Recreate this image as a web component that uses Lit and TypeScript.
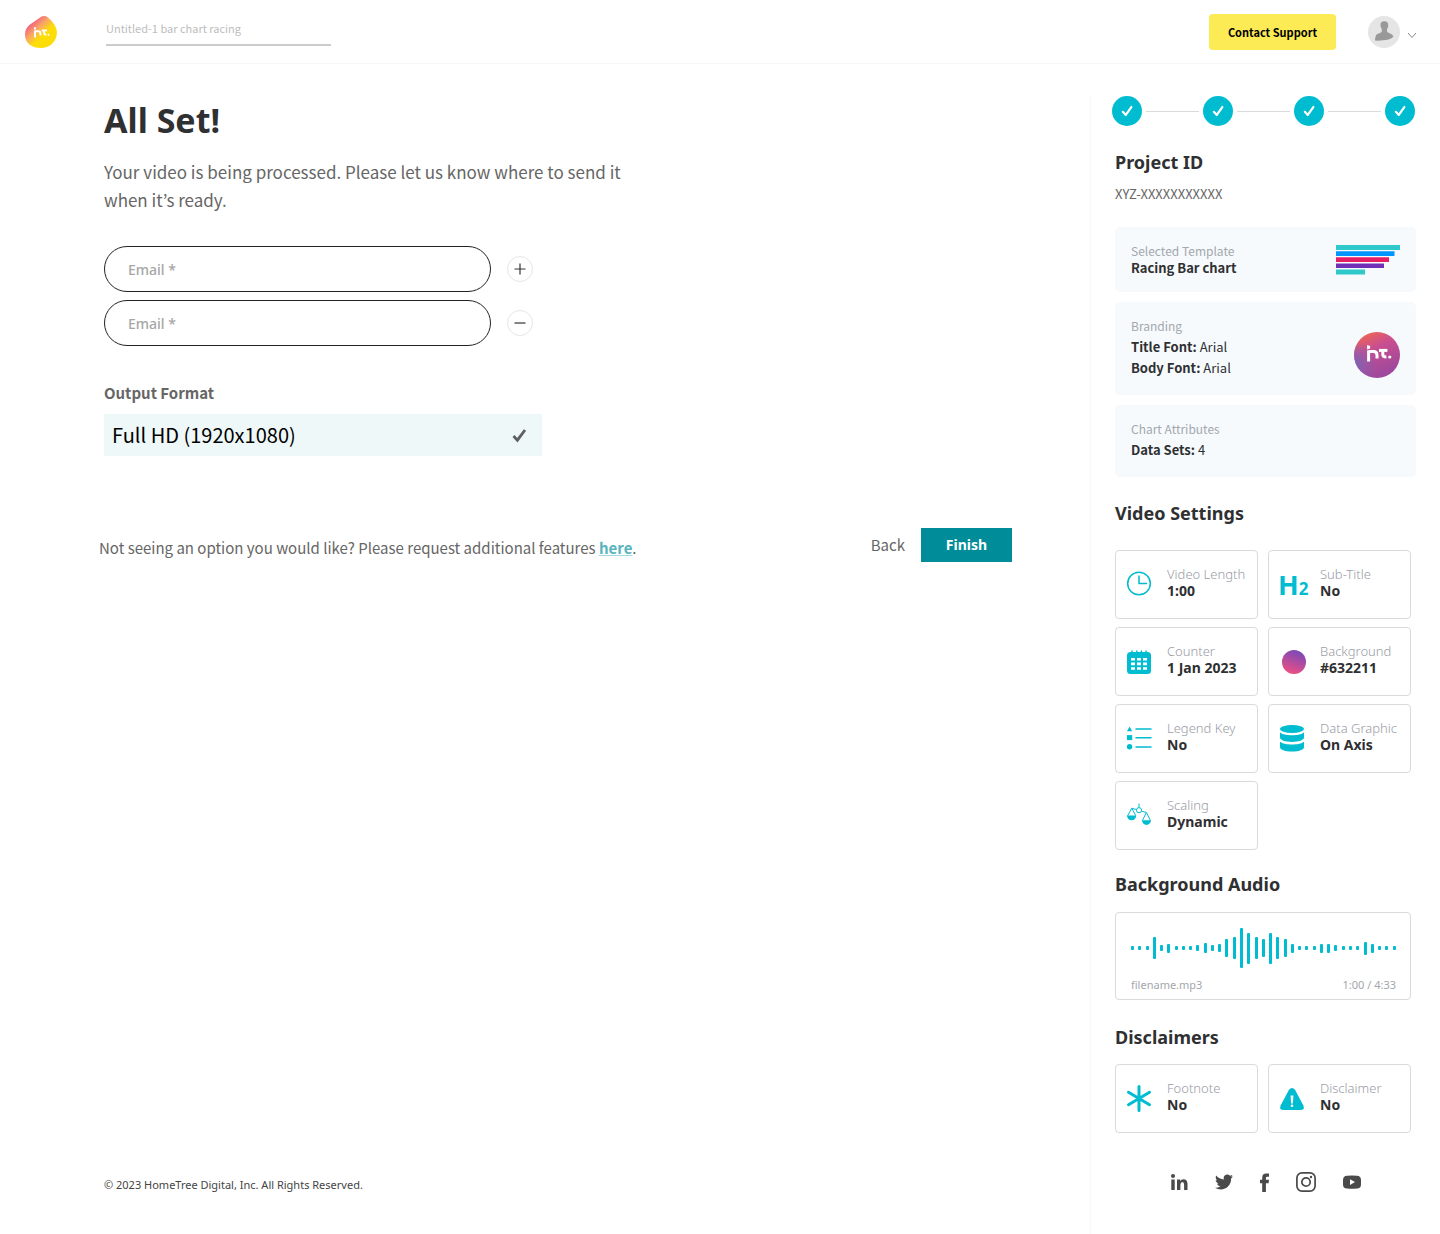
import { LitElement, html, css, svg } from "lit";
import { customElement, property, state } from "lit/decorators.js";

const CYAN = "#00bcd0";

const mark = svg`
  <g fill="none" stroke="#fff" stroke-width="3">
    <path d="M1.6 5.400V16.500"/>
    <path d="M1.6 6.600H6.400Q10 6.600 10 10V13.400"/>
    <path d="M12 5.400H20.400"/>
    <path d="M15.800 5.400V9.800Q15.800 11.900 19.400 11.900"/>
  </g>
  <path fill="#fff" d="M.1 0Q1.600 1 3.100 .6V3.400L.1 4.400Z"/>
  <circle fill="#fff" cx="22.800" cy="12" r="1.600"/>`;

const check = svg`<path fill="none" stroke="currentColor" stroke-width="2.4" stroke-linecap="round" stroke-linejoin="round" d="M2 7.4 5.2 10.8 11.2 2.2"/>`;

const icons: Record<string, unknown> = {
  clock: svg`<g fill="none" stroke="${CYAN}" stroke-width="1.500"><circle cx="12" cy="12.500" r="11.300"/><path d="M12 4.500V12.500H20"/></g>`,
  calendar: svg`<rect x="0" y="4" width="24" height="22" rx="3.5" fill="${CYAN}"/>
    <path stroke="${CYAN}" stroke-width="1.4" stroke-linecap="round" d="M5 3V6M9.8 3V6M14.4 3V6M19 3V6"/>
    <path fill="#fff" d="M4 10h4v2.6H4zM10 10h4v2.6h-4zM16 10h4v2.6h-4zM4 14.6h4v2.6H4zM10 14.6h4v2.6h-4zM16 14.6h4v2.6h-4zM4 19.2h4v2.6H4zM10 19.2h4v2.6h-4zM16 19.2h4v2.6h-4z"/>`,
  list: svg`<g fill="${CYAN}"><path d="M2.6 1.500 5.2 6.300H0Z"/><rect y="10.100" width="5.2" height="5"/><circle cx="2.6" cy="21.800" r="2.7"/></g>
    <path stroke="${CYAN}" stroke-width="1.5" stroke-linecap="round" d="M9 4H24M9 12.800H24M9 22H24"/>`,
  database: svg`<g fill="${CYAN}"><ellipse cx="12" cy="4" rx="12" ry="4"/>
    <path d="M0 7.2C2 9.4 7 10.2 12 10.2S22 9.4 24 7.2V12.6C24 15.2 18.6 17 12 17S0 15.2 0 12.6Z"/>
    <path d="M0 16.4C2 18.6 7 19.4 12 19.4S22 18.6 24 16.4V22C24 24.8 18.6 26.6 12 26.6S0 24.8 0 22Z"/></g>`,
  scales: svg`<g fill="none" stroke="${CYAN}" stroke-width="1"><path d="M12 1.500V5.500M4.800 6.200 9.400 7.600M14.600 9.200 19.400 10.500M4.800 6.200 .6 13.800M4.800 6.200 8.800 13.800M19.400 10.500 15.400 18.500M19.400 10.500 23.400 18.500"/><circle cx="12" cy="8.200" r="2.600"/></g>
    <path fill="${CYAN}" d="M0 13.500H9.200A4.600 4.800 0 0 1 0 13.500ZM15 18.200H24A4.500 4.800 0 0 1 15 18.200Z"/>`,
  asterisk: svg`<path stroke="${CYAN}" stroke-width="3" stroke-linecap="round" d="M12 1.5V25.5M1.5 7.3 22.5 19.7M22.5 7.3 1.5 19.7"/>`,
  warning: svg`<path fill="${CYAN}" d="M9 4.800Q12 1.400 15 4.800L23.400 20.400Q25 25 20.500 25H3.500Q-1 25 .6 20.400Z"/><path fill="#fff" d="M10.600 10.400H13.400L12.900 18.400H11.100Z"/><circle fill="#fff" cx="12" cy="20.800" r="1.300"/>`,
};

@customElement("setting-tile")
class SettingTile extends LitElement {
  @property() label = "";
  @property() value = "";
  @property() icon = "";

  static styles = css`
    :host { display: flex; align-items: center; box-sizing: border-box; height: 69px; padding: 0 0 0 11px; border: 1px solid #d9dadb; border-radius: 4px; background: #fff; }
    .icon { flex: none; width: 28px; height: 28px; margin-right: 12px; overflow: visible; }
    .heading { font: 700 27px "Noto Sans", sans-serif; fill: #00bcd0; }
    .small { font-size: 17px; }
    .swatch { flex: none; width: 24px; height: 24px; margin: 0 14px 0 2px; border-radius: 50%; background: linear-gradient(200deg, #7048bd 5%, #ee4f83 90%); }
    .text { padding-bottom: 5px; white-space: nowrap; }
    .label { font: 300 13px/18px "Noto Sans", sans-serif; color: #9a9ca6; }
    .value { font: 700 14px/16px "Noto Sans", sans-serif; color: #2f3032; }
  `;

  glyph() {
    if (this.icon === "swatch") return html`<span class="swatch"></span>`;
    if (this.icon === "heading")
      return html`<svg class="icon" viewBox="0 0 28 28" aria-hidden="true"><text class="heading" x="-2" y="24">H<tspan class="small">2</tspan></text></svg>`;
    return html`<svg class="icon" viewBox="0 0 28 28" aria-hidden="true">${icons[this.icon]}</svg>`;
  }

  render() {
    return html`${this.glyph()}
      <div class="text"><div class="label">${this.label}</div><div class="value">${this.value}</div></div>`;
  }
}

const socialLinks = [
  { name: "LinkedIn", width: 17, height: 17, art: svg`<circle cx="2" cy="2" r="2"/><path d="M.3 5.500H3.700V16H.3ZM6 5.500H9.200V7Q10.200 5.200 12.500 5.200Q16.500 5.200 16.500 10V16H13.100V10.600Q13.100 8 11.400 8T9.400 10.600V16H6Z"/>` },
  { name: "Twitter", width: 18, height: 16, art: svg`<path d="M18 2.600Q17.200 3.800 16.100 4.500C16.400 10.500 12 15.500 5.800 15.500Q2.600 15.500 0 13.800Q3 14 5.300 12.300Q2.700 12 1.900 9.800H3.500Q.8 8.800 .6 6.100L2.200 6.500Q-.2 4.400 1.200 1.500Q4.300 5.200 8.800 5.400C8.200 2.400 10 .6 12.300 .6Q13.900 .6 15 1.800L17.400 .9Q17 2.200 15.800 2.900Z"/>` },
  { name: "Facebook", width: 9, height: 19, art: svg`<path d="M2.200 19V10.200H0V6.800H2.200V4.600Q2.200.5 6.200.5H9V3.700H7.200Q5.900 3.700 5.900 5V6.800H9L8.600 10.200H5.900V19Z"/>` },
  { name: "Instagram", width: 20, height: 20, art: svg`<g fill="none" stroke="currentColor" stroke-width="1.700"><rect x=".9" y=".9" width="18.200" height="18.200" rx="5"/><circle cx="10" cy="10" r="4.200"/></g><circle cx="15" cy="5" r="1.200"/>` },
  { name: "YouTube", width: 18, height: 14, art: svg`<path fill-rule="evenodd" d="M4 .8Q9 .2 14 .8Q18 1 18 5V9.400Q18 13.300 14 13.500Q9 14 4 13.500Q0 13.300 0 9.400V5Q0 1 4 .8ZM7 4.200V10L12 7.100Z"/>` },
];

@customElement("app-root")
class AppRoot extends LitElement {
  @state() projectName = "Untitled-1 bar chart racing";

  static styles = css`
    :host {
      display: flex; flex-direction: column; min-height: 100vh; box-sizing: border-box; background: #fff; color: #2f3032;
      --noto: "Noto Sans", sans-serif;
      --source: "Noto Sans CJK JP", "Noto Sans", sans-serif;
      font-family: var(--source);
    }
    *, *::before { box-sizing: border-box; }
    h1, h2, p { margin: 0; }
    button { padding: 0; border: 0; background: none; cursor: pointer; }
    svg { display: block; }

    .header { display: flex; align-items: center; height: 64px; padding: 0 23px 0 24px; border-bottom: 1px solid #f6f6f6; }
    .name { width: 225px; height: 28px; margin: 0 auto 0 48px; padding: 0 0 5px; border: 0; border-bottom: 2px solid #ccc; outline: 0; background: none; color: #bdbdbd; font: 400 11px/20px var(--source); }
    .support { width: 127px; height: 36px; border-radius: 4px; background: #fceb54; color: #000; font: 700 11px/36px var(--source); }
    .account { display: flex; align-items: center; gap: 7px; margin-left: 32px; }
    .chevron { margin-top: 8px; }

    .body { flex: 1; display: flex; }
    .main { flex: 1; display: flex; flex-direction: column; min-width: 0; padding: 32px 78px 40px 104px; }
    h1 { font: 700 34px/48px var(--noto); }
    .lead { max-width: 560px; margin-top: 14px; font-size: 17px; line-height: 28px; color: #666; }
    .emails { display: grid; gap: 8px; margin-top: 32px; }
    .email { display: flex; align-items: center; gap: 16px; }
    .field { width: 387px; height: 46px; padding: 0 23px; border: 1px solid #222; border-radius: 23px; background: #fff; font: 500 14px/20px var(--noto); color: #333; }
    .field::placeholder { color: #a6a6a6; opacity: 1; }
    .round { display: grid; place-items: center; width: 26px; height: 26px; border: 1px solid #e6e6e6; border-radius: 50%; color: #333; }
    .format { margin: 35px 0 0; padding: 0; border: 0; }
    .legend { padding: 0; font-weight: 700; font-size: 15px; line-height: 24px; color: #666; }
    .option { display: flex; align-items: center; justify-content: space-between; width: 438px; height: 42px; margin-top: 9px; padding: 0 15px 0 8px; background: #eff8f8; color: #000; font-size: 20px; line-height: 30px; }
    .radio { position: absolute; opacity: 0; }
    .tick { color: #5f5f5f; }
    .actions { display: flex; align-items: center; margin: 72px 0 0 -5px; }
    .more { margin: 6px auto 0 0; font-size: 15px; line-height: 24px; color: #666; }
    .link { color: #58b5bd; font-weight: 700; text-decoration: underline; text-decoration-color: #a5d9dd; }
    .back { margin-right: 16px; font: 400 15px/24px var(--source); color: #666; }
    .finish { width: 91px; height: 34px; background: #008c99; color: #fff; font: 700 14px/20px var(--noto); }
    .copyright { margin-top: auto; font: 400 11px/18px var(--noto); color: #444; }

    .aside { flex: none; width: 350px; margin-top: 32px; padding: 0 24px 40px; border-left: 1px solid #f4f9fc; }
    .steps { display: flex; align-items: center; gap: 4px; margin: 0 1px 0 -3px; padding: 0; list-style: none; }
    .step { display: grid; place-items: center; width: 30px; height: 30px; border-radius: 50%; background: #00bcd0; color: #fff; }
    .line { flex: 1; height: 1px; background: #d9dadb; }
    h2 { font: 700 18px/26px var(--noto); }
    .project { margin-top: 23px; }
    .id { margin-top: 9px; font-size: 13px; line-height: 20px; color: #666; }
    .cards { display: grid; gap: 10px; margin-top: 23px; }
    .card { display: flex; align-items: center; justify-content: space-between; padding: 13px 16px 17px; border-radius: 5px; background: #f6fafd; font-size: 13px; line-height: 21px; }
    .template { padding: 16px; line-height: 17px; }
    .caption { font-size: 12px; color: #a4a7ad; }
    .template .caption { line-height: 16px; }
    .brand { margin-top: 17px; }
    .settings { margin-top: 23px; }
    .grid { display: grid; grid-template-columns: 1fr 1fr; gap: 8px 10px; margin: 24px 5px 0 0; }
    .audio { margin-top: 21px; }
    .player { margin: 15px 5px 0 0; padding: 15px 14px 5px 15px; border: 1px solid #d9dadb; border-radius: 4px; }
    .wave { display: flex; align-items: center; justify-content: space-between; height: 40px; }
    .bar { width: 3px; border-radius: 1px; background: #00bcd0; }
    .meta { display: flex; justify-content: space-between; margin-top: 8px; font: 400 11px/18px var(--noto); color: #a4a7ad; }
    .disclaimers { margin-top: 24px; }
    .notes { margin-top: 14px; }
    .social { display: flex; align-items: center; justify-content: center; gap: 27px; margin-top: 39px; }
    .network { color: #4a4a4a; }
  `;

  wave = [4, 4, 4, 22, 6, 9, 4, 4, 4, 6, 10, 6, 8, 18, 22, 40, 31, 22, 18, 31, 22, 18, 9, 4, 4, 4, 9, 9, 6, 4, 4, 4, 13, 9, 4, 4, 4];
  tiles = [
    ["clock", "Video Length", "1:00"], ["heading", "Sub-Title", "No"],
    ["calendar", "Counter", "1 Jan 2023"], ["swatch", "Background", "#632211"],
    ["list", "Legend Key", "No"], ["database", "Data Graphic", "On Axis"],
    ["scales", "Scaling", "Dynamic"],
  ];
  notes = [["asterisk", "Footnote", "No"], ["warning", "Disclaimer", "No"]];

  tile = ([icon, label, value]: string[]) =>
    html`<setting-tile icon=${icon} label=${label} value=${value}></setting-tile>`;

  step = html`<li class="step"><svg width="12" height="12" viewBox="0 0 13 13">${check}</svg></li>`;
  line = html`<li class="line" aria-hidden="true"></li>`;

  render() {
    return html`
      <header class="header">
        <svg width="34" height="34" viewBox="0 0 34 34" role="img" aria-label="HomeTree">
          <defs><linearGradient id="blob" x1=".1" y1=".15" x2=".62" y2=".7">
            <stop offset=".15" stop-color="#f2607f"/><stop offset=".5" stop-color="#f9a667"/><stop offset=".85" stop-color="#fddd08"/>
          </linearGradient></defs>
          <path fill="url(#blob)" d="M17.500 1.600Q20.800 0 24 2.400C27 5 32.800 11 32.900 17C33 26.500 26 33 17 33C8 33 1 28.500 1 19.500C1 15 2.500 12.200 6 9.400Z"/>
          <g transform="translate(10 12) scale(.64)">${mark}</g>
        </svg>
        <input class="name" aria-label="Project name" .value=${this.projectName}>
        <button class="support">Contact Support</button>
        <button class="account" aria-label="Account">
          <svg width="32" height="32" viewBox="0 0 32 32"><circle cx="16" cy="16" r="16" fill="#e5e5e5"/>
            <path fill="#999" d="M12.500 9Q12.200 5.200 16.300 5.200T20.200 9Q20.500 11 19 13.200V15.500Q19.500 16.600 22 17.400Q25 18.400 25.400 20.800Q21.500 25 7 24.600Q7.200 19.500 9 18.300C11 17 13.500 16.800 13.800 15.400V13.200Q12.500 11.500 12.500 9Z"/></svg>
          <svg class="chevron" width="10" height="7" viewBox="0 0 10 7"><path fill="none" stroke="#888" d="M1 1 5 5.500 9 1"/></svg>
        </button>
      </header>
      <div class="body">
        <main class="main">
          <h1>All Set!</h1>
          <p class="lead">Your video is being processed. Please let us know where to send it when it’s ready.</p>
          <div class="emails">
            <div class="email"><input class="field" type="email" aria-label="Email" placeholder="Email *">
              <button class="round" aria-label="Add email"><svg width="12" height="12" viewBox="0 0 12 12"><path stroke="currentColor" stroke-width="1.200" d="M.5 6H11.500M6 .5V11.500"/></svg></button></div>
            <div class="email"><input class="field" type="email" aria-label="Second email" placeholder="Email *">
              <button class="round" aria-label="Remove email"><svg width="12" height="12" viewBox="0 0 12 12"><path stroke="currentColor" stroke-width="1.200" d="M.5 6H11.500"/></svg></button></div>
          </div>
          <fieldset class="format">
            <legend class="legend">Output Format</legend>
            <label class="option"><input class="radio" type="radio" name="format" checked>Full HD (1920x1080)
              <svg class="tick" width="15" height="15" viewBox="0 0 15 15"><path fill="none" stroke="currentColor" stroke-width="2.800" d="M1.500 8 5.400 12.200 13 2"/></svg></label>
          </fieldset>
          <div class="actions">
            <p class="more">Not seeing an option you would like? Please request additional features <a class="link" href="#">here</a>.</p>
            <button class="back">Back</button>
            <button class="finish">Finish</button>
          </div>
          <footer class="copyright">© 2023 HomeTree Digital, Inc. All Rights Reserved.</footer>
        </main>
        <aside class="aside">
          <ol class="steps">${this.step}${this.line}${this.step}${this.line}${this.step}${this.line}${this.step}</ol>
          <h2 class="project">Project ID</h2>
          <p class="id">XYZ-XXXXXXXXXXX</p>
          <div class="cards">
            <section class="card template">
              <div><div class="caption">Selected Template</div><b>Racing Bar chart</b></div>
              <svg width="65" height="30" viewBox="0 0 65 30">
                <path fill="#2fc9cc" d="M1 0H65V5H1ZM1 24.500H30V29.500H1Z"/><path fill="#0095ff" d="M1 6.200H59.500V11H1Z"/>
                <path fill="#e61e64" d="M1 12.300H54V17H1Z"/><path fill="#7030b8" d="M1 18.400H49V23H1Z"/></svg>
            </section>
            <section class="card">
              <div><div class="caption">Branding</div><div><b>Title Font:</b> Arial</div><div><b>Body Font:</b> Arial</div></div>
              <svg class="brand" width="46" height="46" viewBox="0 0 46 46" role="img" aria-label="Brand logo">
                <defs><linearGradient id="brand" x1=".2" y1="0" x2=".6" y2=".9">
                  <stop offset="0" stop-color="#f4664e"/><stop offset=".4" stop-color="#c94f8f"/><stop offset="1" stop-color="#a0489c"/>
                </linearGradient>
                <radialGradient id="violet" cx="0" cy=".7" r=".5"><stop offset="0" stop-color="#7a63b5"/><stop offset="1" stop-color="#7a63b5" stop-opacity="0"/></radialGradient></defs>
                <circle cx="23" cy="23" r="23" fill="url(#brand)"/><circle cx="23" cy="23" r="23" fill="url(#violet)"/>
                <g transform="translate(13 13)">${mark}</g>
              </svg>
            </section>
            <section class="card"><div><div class="caption">Chart Attributes</div><div><b>Data Sets:</b> 4</div></div></section>
          </div>
          <h2 class="settings">Video Settings</h2>
          <div class="grid">${this.tiles.map(this.tile)}</div>
          <h2 class="audio">Background Audio</h2>
          <div class="player">
            <div class="wave">${this.wave.map((h) => html`<span class="bar" style="height:${h}px"></span>`)}</div>
            <div class="meta"><span>filename.mp3</span><span>1:00 / 4:33</span></div>
          </div>
          <h2 class="disclaimers">Disclaimers</h2>
          <div class="grid notes">${this.notes.map(this.tile)}</div>
          <nav class="social" aria-label="Social media">
            ${socialLinks.map((s) => html`<a class="network" href="#" aria-label=${s.name}><svg width=${s.width} height=${s.height} viewBox="0 0 ${s.width} ${s.height}" fill="currentColor">${s.art}</svg></a>`)}
          </nav>
        </aside>
      </div>`;
  }
}
